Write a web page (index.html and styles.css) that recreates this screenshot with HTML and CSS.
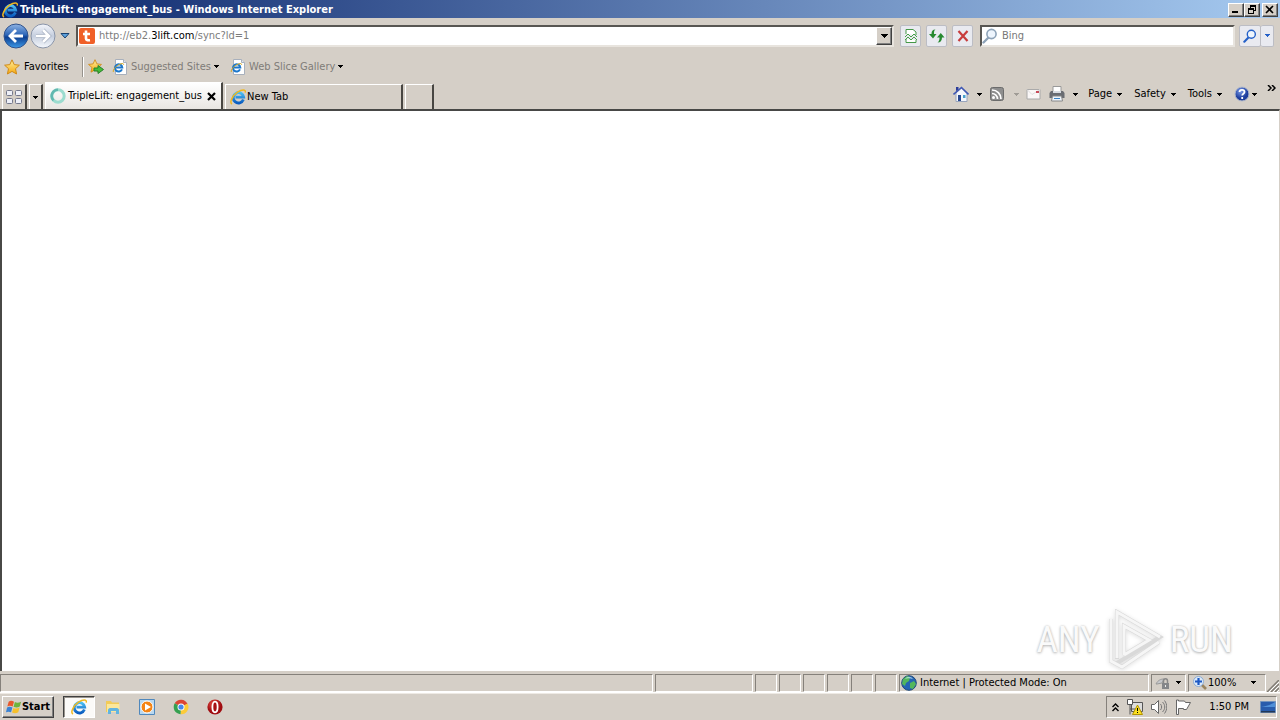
FILE: index.html
```html
<!DOCTYPE html>
<html lang="en">
<head>
<meta charset="utf-8">
<title>TripleLift: engagement_bus - Windows Internet Explorer</title>
<link rel="stylesheet" href="styles.css">
</head>
<body>
<svg class="defs" aria-hidden="true">
  <defs>
    <linearGradient id="blueBall" x1="0" y1="0" x2="0" y2="1"><stop offset="0" stop-color="#8fb4e4"/><stop offset=".45" stop-color="#2d66b8"/><stop offset=".55" stop-color="#0c3f92"/><stop offset="1" stop-color="#3f9be8"/></linearGradient>
    <linearGradient id="paleBall" x1="0" y1="0" x2="0" y2="1"><stop offset="0" stop-color="#f4f6fb"/><stop offset=".5" stop-color="#c5cede"/><stop offset="1" stop-color="#f6f9fd"/></linearGradient>
    <linearGradient id="gold" x1="0" y1="0" x2="0" y2="1"><stop offset="0" stop-color="#fff0a0"/><stop offset="1" stop-color="#f6a80c"/></linearGradient>
    <linearGradient id="ieBlue" x1="0" y1="0" x2="0" y2="1"><stop offset="0" stop-color="#4cc0f4"/><stop offset="1" stop-color="#0a5cc0"/></linearGradient>
    <radialGradient id="redBall" cx=".4" cy=".3"><stop offset="0" stop-color="#e85048"/><stop offset="1" stop-color="#a00c10"/></radialGradient>
    <radialGradient id="helpBall" cx=".4" cy=".3"><stop offset="0" stop-color="#7c9ce8"/><stop offset="1" stop-color="#1c3c9c"/></radialGradient>
  </defs>
  <symbol id="ie" viewBox="0 0 16 16">
    <path d="M13.400 10.600A5.200 5.200 0 1 1 13.700 8.200H5.500" fill="none" stroke="url(#ieBlue)" stroke-width="2.800"/>
    <path d="M2 15C-1 13.500 2.500 6.600 7.500 3.200 12 .2 16 0 15.300 3.600" fill="none" stroke="#f0b820" stroke-width="1.500"/>
  </symbol>
  <symbol id="iepage" viewBox="0 0 16 16">
    <path d="M3.500.5h8l3 3v12h-11z" fill="#fff" stroke="#a8b0bc"/><path d="M11.500.5v3h3" fill="#dde4ee" stroke="#a8b0bc"/>
    <path d="M10 10.400A3.700 3.700 0 1 1 10.300 8.600H4" fill="none" stroke="#1d78cc" stroke-width="2"/>
    <path d="M1.400 13C.4 11 4 6.400 9 4.800c2-.6 2.800-.2 2.600 1" fill="none" stroke="#d8a820"/>
  </symbol>
  <symbol id="star" viewBox="0 0 16 16"><path d="M8 .8l2.200 4.800 5.200.6-3.900 3.500 1.100 5.300L8 12.400 3.400 15l1.100-5.300L.6 6.200l5.200-.6z" fill="url(#gold)" stroke="#d08a18"/></symbol>
  <symbol id="down" viewBox="0 0 5 3"><path d="M0 0h5v1H4v1H3v1H2V2H1V1H0z" fill="currentColor"/></symbol>
  <symbol id="lens" viewBox="0 0 16 16"><path d="M6.500 9.500l-5 5" stroke="currentColor" stroke-width="2.400" stroke-linecap="round"/><circle cx="9.500" cy="6" r="4.600" fill="#eef5fd" stroke="currentColor" stroke-width="1.600"/></symbol>
</svg>

<header class="titlebar">
  <svg class="ico"><use href="#ie"/></svg>
  <h1 class="title">TripleLift: engagement_bus - Windows Internet Explorer</h1>
  <div class="winbtns">
    <button class="raised winbtn" aria-label="Minimize"><svg width="10" height="9"><path d="M1 6h6v2H1z"/></svg></button>
    <button class="raised winbtn" aria-label="Restore"><svg width="10" height="9"><path d="M3 0h6v6H7V5h1V2H4v1H3zM1 3h6v6H1zm1 2v3h4V5z" fill-rule="evenodd"/></svg></button>
    <button class="raised winbtn close" aria-label="Close"><svg width="10" height="9"><path d="M1 1l7 7M8 1L1 8" stroke="#000" stroke-width="1.600"/></svg></button>
  </div>
</header>

<div class="nav">
  <div class="travel">
    <button class="ball" aria-label="Back"><svg viewBox="0 0 26 26"><circle cx="13" cy="13" r="12" fill="url(#blueBall)" stroke="#31538c"/><path d="M13 7l-6 6 6 6M7.500 13H20" fill="none" stroke="#fff" stroke-width="2.800"/></svg></button>
    <button class="ball" aria-label="Forward"><svg viewBox="0 0 26 26"><circle cx="13" cy="13" r="12" fill="url(#paleBall)" stroke="#8994a8"/><path d="M13 7l6 6-6 6M18.500 13H6" fill="none" stroke="#a5afc0" stroke-width="4"/><path d="M13 7l6 6-6 6M18.500 13H6" fill="none" stroke="#fff" stroke-width="2.600"/></svg></button>
    <button class="recent" aria-label="Recent pages"><svg width="10" height="6"><path d="M1 .5h8L5 5z" fill="#5ba0dc" stroke="#19416f"/></svg></button>
  </div>
  <div class="sunken address">
    <svg class="ico" viewBox="0 0 16 16"><rect width="16" height="16" rx="2" fill="#f06028"/><path d="M7 2.500v8c0 1.600 1.400 2 4 1.700M4 6h7" fill="none" stroke="#fff" stroke-width="2.600"/></svg>
    <div class="url" role="textbox" aria-label="Address" contenteditable="true" spellcheck="false">http://eb2.<b>3lift.com</b>/sync?ld=1</div>
    <button class="raised drop" aria-label="Show address list"><svg width="7" height="4"><path d="M0 0h7v1H6v1H5v1H4v1H3V3H2V2H1V1H0z"/></svg></button>
  </div>
  <div class="actions">
    <button class="soft" aria-label="Compatibility view"><svg class="ico" viewBox="0 0 16 16"><path d="M3 6V1.500h7L13 4v3M3 11v3.500h10V12" fill="#fff" stroke="#459848"/><path d="M2 9l3-3 3 3 3-3 3 3M2 12l3-3 3 3 3-3 3 3" fill="none" stroke="#45a048"/></svg></button>
    <button class="soft" aria-label="Refresh"><svg class="ico" viewBox="0 0 16 16"><path d="M0 6h2.500c0-3 1-4.500 4-4.500-1.500 1-1.500 2-1.500 4.500h2.500L4 10.500zM8 9.500L11.800 5 15.500 9.500H13c0 3-1.500 5-4.500 5 1.500-1 2-2.500 2-5z" fill="#278a30"/></svg></button>
    <button class="soft" aria-label="Stop"><svg class="ico" viewBox="0 0 16 16"><path d="M3.500 3l9 10M12.500 3l-9 10" stroke="#c83c3c" stroke-width="2.200"/></svg></button>
  </div>
  <div class="sunken search">
    <svg class="ico lens"><use href="#lens"/></svg>
    <input class="field" type="text" placeholder="Bing" aria-label="Search Bing">
  </div>
  <div class="go">
    <button class="soft find" aria-label="Search"><svg class="glass"><use href="#lens"/></svg></button>
    <button class="soft thin" aria-label="Search options"><svg class="arr"><use href="#down"/></svg></button>
  </div>
</div>

<div class="favorites">
  <button class="flat favs"><svg class="ico"><use href="#star"/></svg>Favorites</button>
  <span class="rule"></span>
  <button class="flat add" aria-label="Add to Favorites bar"><svg class="ico" viewBox="0 0 16 16"><use href="#star" width="14" height="14"/><path d="M6 9h4V6.500l5.500 4-5.500 4V12H6z" fill="#45bd38" stroke="#26812a"/></svg></button>
  <button class="flat link"><svg class="ico"><use href="#iepage"/></svg>Suggested Sites<svg class="arr"><use href="#down"/></svg></button>
  <button class="flat link"><svg class="ico"><use href="#iepage"/></svg>Web Slice Gallery<svg class="arr"><use href="#down"/></svg></button>
</div>

<div class="tabrow">
  <div class="tabs">
    <button class="tab quick" aria-label="Quick tabs"><svg class="ico" viewBox="0 0 16 16"><g fill="#eef0f8" stroke="#74788c"><rect x=".5" y="1.500" width="6" height="5" rx="1"/><rect x="9.500" y="1.500" width="6" height="5" rx="1"/><rect x=".5" y="9.500" width="6" height="5" rx="1"/><rect x="9.500" y="9.500" width="6" height="5" rx="1"/></g></svg></button>
    <button class="tab list" aria-label="Tab list"><svg class="arr"><use href="#down"/></svg></button>
    <div class="tab active"><svg class="ico" viewBox="0 0 16 16"><circle cx="8" cy="8" r="6.200" fill="none" stroke="#9cdccf" stroke-width="3"/><path d="M8 1.800A6.200 6.200 0 0 0 3.500 12.300" fill="none" stroke="#62b8b0" stroke-width="2.600"/></svg><span class="name">TripleLift: engagement_bus</span><button class="flat x" aria-label="Close tab"><svg width="9" height="9"><path d="M1 1l7 7M8 1L1 8" stroke="#000" stroke-width="2.200"/></svg></button></div>
    <button class="tab other"><svg class="ico"><use href="#ie"/></svg>New Tab</button>
    <button class="tab blank" aria-label="New tab"></button>
  </div>
  <div class="commands">
    <button class="flat cmd home" aria-label="Home"><svg class="ico" viewBox="0 0 16 16"><path d="M3 7v8.500h11V7L8.500 2z" fill="#f4f6fc" stroke="#98a4bc"/><path d="M3 5V1h2.500v3" fill="#2c3c98"/><path d="M.5 8.500l8-7 7 7" fill="none" stroke="#4058b4" stroke-width="1.600"/><path d="M5 9h3v6H5z" fill="#284890"/><path d="M10 9h2.500v3H10z" fill="#48a0cc"/></svg><svg class="arr"><use href="#down"/></svg></button>
    <button class="flat cmd feeds" aria-label="Feeds"><svg class="ico" viewBox="0 0 16 16"><rect x="1.500" y="1.500" width="13" height="13" rx="2" fill="#8e8e8e" stroke="#6c6c6c"/><circle cx="4.500" cy="11.500" r="1.500" fill="#fff"/><path d="M3 7.500a5.500 5.500 0 0 1 5.500 5.500M3 4a9 9 0 0 1 9 9" fill="none" stroke="#fff" stroke-width="1.700"/></svg><svg class="arr"><use href="#down"/></svg></button>
    <button class="flat cmd mail" aria-label="Read mail"><svg class="ico" viewBox="0 0 16 16"><path d="M1 3.500h13v9.500H1z" fill="#faf7f7" stroke="#aaa"/><path d="M1 3.500l5 5 8-5" fill="none" stroke="#ddd"/><path d="M10 5h3v2h-3z" fill="#c84858"/></svg></button>
    <button class="flat cmd print" aria-label="Print"><svg class="ico" viewBox="0 0 16 16"><path d="M4 .5h8V7H4z" fill="#fff" stroke="#999"/><path d="M2 5h12l1.500 2v5H.5V7z" fill="#696c72"/><path d="M4 5h8v2H4z" fill="#d8dce2"/><path d="M3.500 10h9l1 5h-11z" fill="#edf4fb" stroke="#888"/><path d="M5 12h6v1H5z" fill="#3a82c4"/></svg><svg class="arr"><use href="#down"/></svg></button>
    <button class="flat cmd">Page<svg class="arr"><use href="#down"/></svg></button>
    <button class="flat cmd">Safety<svg class="arr"><use href="#down"/></svg></button>
    <button class="flat cmd">Tools<svg class="arr"><use href="#down"/></svg></button>
    <button class="flat cmd help" aria-label="Help"><svg class="ico" viewBox="0 0 16 16"><circle cx="8" cy="8" r="7" fill="url(#helpBall)" stroke="#b4bccc"/><path d="M5.500 6c.2-3 5-2.600 5 0 0 1.800-2.300 1.700-2.300 3.600M8.200 11v2" fill="none" stroke="#fff" stroke-width="1.800"/></svg><svg class="arr"><use href="#down"/></svg></button>
    <button class="flat more" aria-label="More commands"><svg width="9" height="6"><path d="M1 0l3 3-3 3M5 0l3 3-3 3" fill="none" stroke="#000" stroke-width="1.500"/></svg></button>
  </div>
</div>

<main class="page">
  <div class="mark">
    <span>ANY</span>
    <svg width="58" height="62" viewBox="0 0 58 62"><path d="M11 50V3l43 25L11 54M18 46V17l25 14-25 15M5 10v42l11 6 37-25" fill="none" stroke="#d9d9d9" stroke-width="4"/><path d="M11 49V3l43 25M18 46V17l25 14-25 15M5 9v43l11 6 37-25" fill="none" stroke="#f6f6f6" stroke-width="3"/></svg>
    <span>RUN</span>
  </div>
</main>

<footer class="status">
  <div class="cell main"></div>
  <div class="cell progress"></div>
  <div class="cell tiny"></div><div class="cell tiny"></div><div class="cell tiny"></div><div class="cell tiny"></div><div class="cell tiny"></div><div class="cell tiny"></div>
  <div class="cell zone"><svg class="ico" viewBox="0 0 16 16"><circle cx="8" cy="8" r="7.300" fill="#2565b4" stroke="#204878"/><path d="M2 4l4-3 3 1-1 4-3 2-1 3-3-2zM9 8l4-2 2 3-3 5-3-1z" fill="#53b75c"/><path d="M4 4c2-3 6-3 8 0-3-1-6-1-8 0z" fill="#c4e8f8" opacity=".7"/></svg>Internet | Protected Mode: On</div>
  <div class="cell privacy"><svg class="ico" viewBox="0 0 16 16"><path d="M1 9c2-4 5-5 8-5l-2 4-5 1z" fill="#c6c8cc" stroke="#999"/><path d="M8.500 8V6c0-3 4-3 4 0v2" fill="none" stroke="#888" stroke-width="1.500"/><rect x="7" y="8" width="7" height="6" fill="#85878a"/><path d="M10 10h1v2h-1z" fill="#eee"/></svg><svg class="arr"><use href="#down"/></svg></div>
  <button class="cell zoom"><svg class="ico" viewBox="0 0 16 16"><path d="M9 9l5 5" stroke="#9b8560" stroke-width="2.600"/><circle cx="6.500" cy="6.500" r="5" fill="#dceafa" stroke="#8cacd4"/><path d="M6.500 3v7M3 6.500h7" stroke="#1c58c4" stroke-width="2.200"/></svg>100%<svg class="arr"><use href="#down"/></svg></button>
  <svg class="grip" width="12" height="12"><path d="M0 12L12 0M4 12l8-8M8 12l4-4" stroke="#807c74" stroke-width="1.500"/><path d="M2 12L12 2M6 12l6-6M10 12l2-2" stroke="#fff"/></svg>
</footer>

<nav class="taskbar">
  <button class="raised start"><svg class="ico" viewBox="0 0 18 16"><path d="M3 2c2-1.400 4-1 6 0L7.500 7.500C5.500 6.300 3.600 6.200 1.500 7.300z" fill="#e8582c"/><path d="M10 2.500c2 1 4 1 7-.5L15.500 7.500c-2.200 1.200-4.500 1.300-7 .3z" fill="#6eb43c"/><path d="M1.200 8.500c2-1.200 4-1 6 0L5.700 14c-2-1-4-1-5.700 0z" fill="#3a82d4"/><path d="M8.300 9c2 1 4 1 7-.5L13.800 14c-2.300 1.200-4.500 1.300-7 .3z" fill="#f6c02c"/></svg>Start</button>
  <div class="apps">
    <button class="app current" aria-label="Internet Explorer"><svg class="ico"><use href="#ie"/></svg></button>
    <button class="app" aria-label="Windows Explorer"><svg class="ico" viewBox="0 0 16 16"><path d="M1 2h5l1 1.500h7V13H1z" fill="#f2cb58"/><path d="M2 5h12.500v8H2z" fill="#fbe79b"/><path d="M3 15v-4c0-1 1-2 2-2h7c1 0 2 1 2 2v4h-3v-3H6v3z" fill="#62b4e0"/></svg></button>
    <button class="app" aria-label="Media Player"><svg class="ico" viewBox="0 0 16 16"><path d="M.5.5h15v15H.5z" fill="#b8d8f0" stroke="#5088bc"/><circle cx="8" cy="8" r="6" fill="#f48414" stroke="#fff"/><path d="M6 4.500v7L12 8z" fill="#fff"/></svg></button>
    <button class="app" aria-label="Chrome"><svg class="ico" viewBox="0 0 16 16"><path d="M8 8L1.700 4.300A7.200 7.200 0 0 1 14.500 5z" fill="#dc4534"/><path d="M8 8l6.500-3.500A7.200 7.200 0 0 1 7.500 15.200z" fill="#fccb38"/><path d="M8 8l-.5 7.200A7.200 7.200 0 0 1 1.700 4.300z" fill="#35a050"/><circle cx="8" cy="8" r="3.500" fill="#fff"/><circle cx="8" cy="8" r="2.600" fill="#4888ec"/></svg></button>
    <button class="app" aria-label="Opera"><svg class="ico" viewBox="0 0 16 16"><circle cx="8" cy="8" r="7.600" fill="url(#redBall)"/><ellipse cx="8" cy="8" rx="2.600" ry="5.300" fill="#a81014" stroke="#fff" stroke-width="1.800"/></svg></button>
  </div>
  <div class="tray">
    <button class="flat up" aria-label="Show hidden icons"><svg width="7" height="9"><path d="M.5 4l3-3 3 3M.5 8l3-3 3 3" fill="none" stroke="#000" stroke-width="1.400"/></svg></button>
    <svg class="ico" viewBox="0 0 16 16"><path d="M4.500 3.500h11v9h-11z" fill="#ddd" stroke="#555"/><path d="M.5.500h5v5h-5zM3 5.500v10M3 10h5" fill="#fff" stroke="#555"/><path d="M10.500 6l5 9.500h-10z" fill="#fce020" stroke="#b49400"/><path d="M10 9h1v3h-1zM10 13h1v1h-1z"/></svg>
    <svg class="ico vol" viewBox="0 0 16 16"><path d="M.5 5.500h3l4-4v13l-4-4h-3z" fill="#fff" stroke="#666"/><path d="M9.500 5c1.500 2 1.500 4 0 6M11.500 3c3 3 3 7 0 10M13.500 1.500c3 4 3 9 0 13" fill="none" stroke="#777"/></svg>
    <svg class="ico" viewBox="0 0 16 16"><path d="M1.500 1v14.500h2V9.500h5v1h3l4-7h-5l-1-1.500H3.500V1z" fill="#fff" stroke="#666"/></svg>
    <time class="clock">1:50 PM</time>
    <button class="flat desk" aria-label="Show desktop"><svg class="ico" viewBox="0 0 16 16"><path d="M.5 2.500h15v11H.5z" fill="#285cac" stroke="#7494bc"/><path d="M1 8c5-1 9-2 14-5v5z" fill="#5090d8"/><path d="M1 12h14v1.500H1z" fill="#223858"/></svg></button>
  </div>
</nav>
</body>
</html>
```
FILE: styles.css
```css
* { box-sizing: border-box; }
html, body { height: 100%; }
body {
  margin: 0;
  display: flex;
  flex-direction: column;
  overflow: hidden;
  background: #d5cfc7;
  color: #000;
  font: 11px/14px Tahoma, "DejaVu Sans Condensed", "DejaVu Sans", sans-serif;
}
svg { display: block; flex: none; }
.defs { position: absolute; width: 0; height: 0; }
button { font: inherit; color: inherit; margin: 0; padding: 0; border: 0; border-radius: 0; background: none; display: flex; align-items: center; white-space: nowrap; }
.ico { width: 16px; height: 16px; }
.arr { width: 5px; height: 3px; }
.raised {
  background: #d5cfc7;
  border: 1px solid;
  border-color: #fff #404040 #404040 #fff;
  box-shadow: inset -1px -1px #808080;
  justify-content: center;
}
.sunken {
  display: flex;
  align-items: center;
  height: 22px;
  background: #fff;
  border: 2px solid;
  border-color: #585652 #e8e4de #e8e4de #585652;
}

.titlebar { flex: none; display: flex; align-items: center; height: 18px; padding: 1px 2px 0; gap: 2px; background: linear-gradient(90deg, #0a246a, #a6caf0); color: #fff; }
.title { flex: 1; margin: 0; font: bold 11px/14px Tahoma, "DejaVu Sans Condensed", "DejaVu Sans", sans-serif; white-space: nowrap; }
.winbtns { display: flex; color: #000; }
.winbtn { width: 16px; height: 14px; }
.close { margin-left: 2px; }

.nav { flex: none; display: flex; align-items: center; height: 35px; padding: 0 6px 0 3px; }
.travel { display: flex; align-items: center; gap: 1px; width: 73px; }
.ball { width: 26px; height: 26px; }
.ball svg { width: 26px; height: 26px; }
.recent { margin-left: 3px; }
.address { flex: 1; }
.address .ico { margin: 0 4px 0 1px; }
.url { flex: 1; color: #7c7c7c; outline: 0; white-space: nowrap; }
.url b { font-weight: normal; color: #000; }
.drop { width: 16px; height: 18px; }
.actions { display: flex; gap: 5px; margin: 0 7px 0 6px; }
.soft { justify-content: center; width: 21px; height: 22px; background: #e9eaf0; border: 1px solid #bcbdc4; border-radius: 2px; }
.search { width: 255px; }
.lens { color: #8ea3b8; }
.field { flex: 1; min-width: 0; border: 0; padding: 0 4px; outline: 0; background: none; font: inherit; }
.field::placeholder { color: #777; opacity: 1; }
.go { display: flex; margin-left: 4px; color: #2460c8; }
.find { width: 22px; }
.glass { width: 14px; height: 14px; }
.thin { width: 13px; border-left: 0; }

.favorites { flex: none; display: flex; align-items: center; height: 26px; padding: 1px 4px 0; }
.favs { gap: 4px; width: 78px; }
.rule { width: 2px; height: 20px; border-left: 1px solid #96928c; border-right: 1px solid #fff; }
.add { width: 28px; padding-left: 4px; }
.link { gap: 3px; color: #7f7c78; width: 118px; }
.link .arr { color: #000; }

.tabrow { flex: none; display: flex; height: 30px; padding: 0 4px 0 2px; justify-content: space-between; }
.tabs { display: flex; align-items: flex-end; gap: 2px; }
.tab { display: flex; align-items: center; height: 25px; border-top: 1px solid #fff; border-left: 1px solid #fff; border-right: 2px solid #484642; }
.quick { width: 25px; justify-content: center; }
.list { width: 14px; justify-content: center; }
.active { width: 178px; height: 27px; background: linear-gradient(#fff, #e9e6e2); padding: 0 3px 0 4px; gap: 2px; }
.name { flex: 1; white-space: nowrap; }
.x { padding: 3px; }
.other { width: 178px; padding-left: 4px; gap: 1px; }
.blank { width: 29px; }
.commands { display: flex; align-items: center; height: 30px; gap: 12px; }
.cmd { gap: 5px; }
.home { gap: 8px; }
.feeds { gap: 9px; }
.feeds .arr { color: #a09c96; }
.home, .feeds, .mail { margin-right: -5px; }
.print { gap: 8px; margin-right: -2px; }
.help { gap: 2px; margin-right: -2px; }
.more { align-self: flex-start; padding-top: 6px; }

.page { flex: 1; position: relative; background: #fff; border-style: solid; border-width: 2px 1px 0 2px; border-color: #484846 #d5cfc7 #d5cfc7 #484846; }
.mark {
  position: absolute;
  right: 46px;
  bottom: 0;
  display: flex;
  align-items: center;
  gap: 6px;
  color: #fafafa;
  font: 37px/62px "Roboto Condensed", "Liberation Sans Narrow", "Liberation Sans", sans-serif;
  text-shadow: 0 1px 3px #b4b4b4, 0 0 2px #ccc;
}
.mark svg { filter: drop-shadow(0 1px 2px #ddd); }

.status { flex: none; display: flex; align-items: center; gap: 2px; height: 22px; padding: 2px 1px 0 0; border-bottom: 1px solid #fff; }
.cell { display: flex; align-items: center; height: 18px; border: 1px solid; border-color: #85817b #fff #fff #85817b; white-space: nowrap; }
.main { flex: 1; }
.progress { width: 98px; }
.tiny { width: 22px; }
.zone { width: 250px; gap: 3px; padding-left: 1px; }
.privacy { width: 35px; gap: 5px; padding-left: 3px; }
.zoom { width: 78px; padding-left: 3px; }
.zoom .arr { margin: 0 9px 0 auto; }
.grip { align-self: flex-end; margin-left: -1px; }

.taskbar { flex: none; display: flex; align-items: center; height: 27px; padding: 0 3px 0 2px; border-top: 1px solid #eeeae4; }
.start { width: 52px; height: 22px; font-weight: bold; }
.apps { display: flex; flex: 1; align-items: center; gap: 2px; padding-left: 9px; }
.app { width: 32px; height: 22px; justify-content: center; }
.current { background: #fbfaf8; border: 1px solid; border-color: #404040 #fff #fff #404040; box-shadow: inset 1px 1px #99958f; }
.tray { display: flex; align-items: center; height: 22px; width: 171px; gap: 8px; padding-left: 5px; border: 1px solid; border-color: #85817b #fff #fff #85817b; }
.clock { margin: 0 3px 0 auto; }
```
